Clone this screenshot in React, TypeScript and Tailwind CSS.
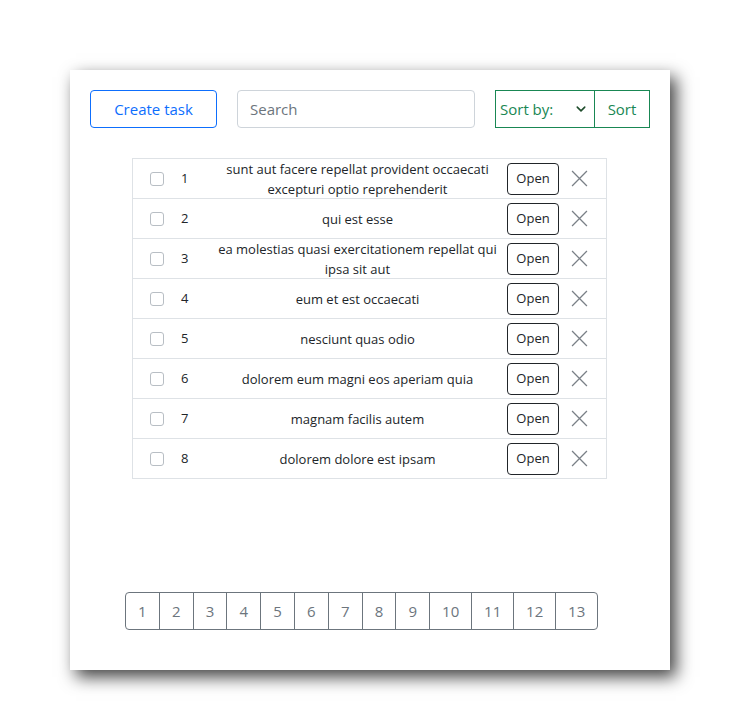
import { useState } from "react";

const TASKS = [
  "sunt aut facere repellat provident occaecati excepturi optio reprehenderit",
  "qui est esse",
  "ea molestias quasi exercitationem repellat qui ipsa sit aut",
  "eum et est occaecati",
  "nesciunt quas odio",
  "dolorem eum magni eos aperiam quia",
  "magnam facilis autem",
  "dolorem dolore est ipsam",
];

const PAGES = [1, 2, 3, 4, 5, 6, 7, 8, 9, 10, 11, 12, 13];

export default function App() {
  const [search, setSearch] = useState("");

  return (
    <div className="min-h-[709px] bg-white pt-[70px] pl-[70px]" style={{ fontFamily: "'Open Sans', 'Noto Sans', sans-serif" }}>
      <div className="w-[600px] h-[600px] bg-white shadow-[6px_7px_16px_rgba(0,0,0,0.75)] px-5 pt-5 flex flex-col">
        {/* Toolbar */}
        <div className="flex items-center h-[38px]">
          <button className="w-[127px] h-[38px] border border-[#0d6efd] rounded text-[#0d6efd] text-[15px]">Create task</button>
          <input
            value={search}
            onChange={e => setSearch(e.target.value)}
            placeholder="Search"
            className="ml-5 w-[238px] h-[38px] border border-[#ced4da] rounded px-3 text-[15px] placeholder:text-[#6c757d] outline-none"
          />
          <div className="ml-5 flex h-[38px]">
            <div className="w-[100px] h-[38px] border border-[#198754] flex items-center justify-between pl-1 pr-2 text-[#198754] text-[15px]">
              <span>Sort by:</span>
              <svg width="10" height="10" viewBox="0 0 16 16"><path d="M2 5l6 6 6-6" fill="none" stroke="#1f4d2c" strokeWidth="2.5" strokeLinecap="round" strokeLinejoin="round" /></svg>
            </div>
            <button className="w-[55px] h-[38px] border border-l-0 border-[#198754] text-[#198754] text-[15px]">Sort</button>
          </div>
        </div>

        {/* Task list */}
        <div className="ml-[42px] mt-[30px] w-[475px] border-x border-b border-[#dee2e6]">
          {TASKS.map((title, i) => (
            <div key={i} className="flex items-center h-[40px] border-t border-[#dee2e6] text-[13px] text-[#212529]">
              <div className="w-[48px] flex justify-end pr-[17px]">
                <span className="block w-[14px] h-[14px] border border-[#b8bec4] rounded-[3px]" />
              </div>
              <div className="w-[27px]">{i + 1}</div>
              <div className="w-[299px] text-center leading-[20px] px-1">{title}</div>
              <div className="w-[52px]">
                <button className="w-[52px] h-[32px] border border-[#212529] rounded text-[13px]">Open</button>
              </div>
              <div className="flex-1 flex justify-center pr-[6px]">
                <svg width="17" height="17" viewBox="0 0 16 16"><path d="M1 1l14 14M15 1L1 15" stroke="#7a8087" strokeWidth="1.2" /></svg>
              </div>
            </div>
          ))}
        </div>

        {/* Pagination */}
        <div className="mt-auto mb-[40px] ml-[35px] flex">
          {PAGES.map((p, i) => (
            <button
              key={p}
              className={`h-[38px] border border-[#6c757d] text-[#6c757d] text-[15px] ${p < 10 ? "w-[34.8px]" : "w-[43px]"} ${i > 0 ? "-ml-px" : ""} ${i === 0 ? "rounded-l" : ""} ${i === PAGES.length - 1 ? "rounded-r" : ""}`}
            >
              {p}
            </button>
          ))}
        </div>
      </div>
    </div>
  );
}
